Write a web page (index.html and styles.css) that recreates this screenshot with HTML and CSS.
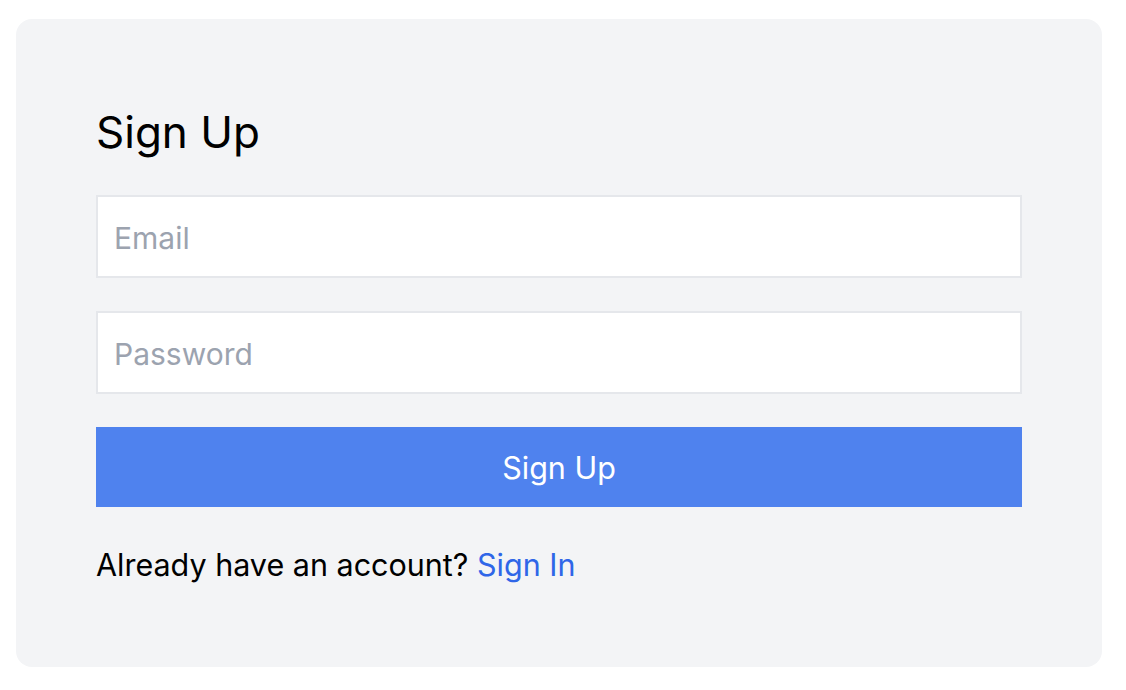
FILE: index.html
```html
<!DOCTYPE html>
<html lang="en">
<head>
<meta charset="utf-8">
<title>Sign Up</title>
<link rel="stylesheet" href="styles.css">
</head>
<body>
  <div class="card">
    <h1 class="title">Sign Up</h1>
    <form class="form">
      <input class="field" type="email" placeholder="Email">
      <input class="field" type="password" placeholder="Password">
      <button class="btn" type="button">Sign Up</button>
    </form>
    <p class="alt">Already have an account? <a class="link" href="#">Sign In</a></p>
  </div>
</body>
</html>
```
FILE: styles.css
```css
* { box-sizing: border-box; }
html, body { margin: 0; padding: 0; background: #ffffff; }
body {
  font-family: Inter, "Noto Sans", "Liberation Sans", sans-serif;
  color: #000000;
}
.card {
  margin: 19px 0 0 16px;
  width: 1086px;
  height: 648px;
  padding: 80px;
  background: #f3f4f6;
  border-radius: 16px;
  display: flex;
  flex-direction: column;
}
.title {
  margin: 0 0 30px 0;
  font-size: 44px;
  line-height: 66px;
  font-weight: 400;
}
.form {
  display: flex;
  flex-direction: column;
  gap: 33px;
}
.field {
  height: 83px;
  width: 100%;
  border: 2px solid #e5e7eb;
  background: #ffffff;
  padding: 3px 16px 0 16px;
  font-family: inherit;
  font-size: 30px;
  color: #111827;
  outline: none;
  border-radius: 0;
}
.field::placeholder { color: #9ca3af; }
.btn {
  height: 80px;
  width: 100%;
  border: 0;
  background: #4f82ee;
  color: #ffffff;
  font-family: inherit;
  font-size: 30.5px;
  border-radius: 0;
  padding: 0;
}
.alt {
  margin: 37px 0 0 0;
  font-size: 30.5px;
  line-height: 42px;
}
.link {
  color: #2f66e8;
  text-decoration: none;
}
```
